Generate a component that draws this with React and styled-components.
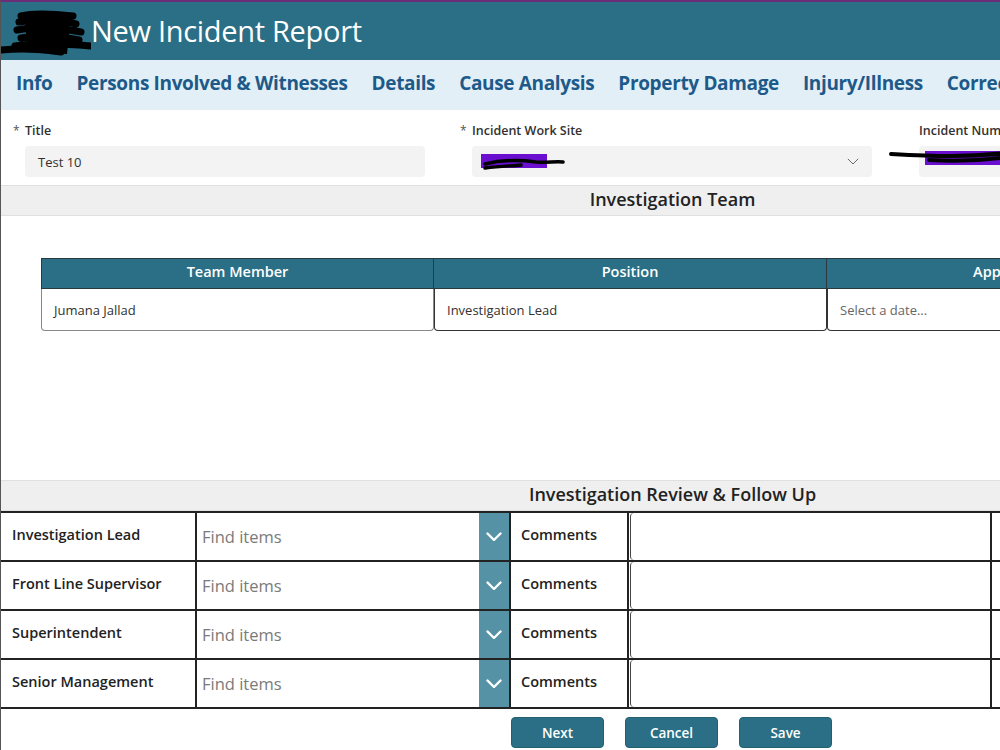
import React from 'react';
import styled, { createGlobalStyle } from 'styled-components';

const Global = createGlobalStyle`
  html, body {
    margin: 0;
    padding: 0;
    background: #ffffff;
    overflow: hidden;
  }
  body {
    font-family: "Open Sans", "Noto Sans", "Liberation Sans", sans-serif;
  }
`;

const TEAL = '#2a6f85';

const Page = styled.div`
  width: 1344px;
  height: 750px;
  border-top: 2px solid #6b2c78;
  border-left: 1px solid #555;
  box-sizing: border-box;
  background: #fff;
`;

const Header = styled.header`
  height: 58px;
  background: ${TEAL};
  display: flex;
  align-items: center;
`;

const Logo = styled.svg`
  width: 90px;
  height: 50px;
  flex-shrink: 0;
`;

const Title = styled.h1`
  margin: 0 0 2px 0;
  color: #fff;
  font-size: 29px;
  font-weight: 500;
  letter-spacing: -0.3px;
`;

const Nav = styled.nav`
  height: 50px;
  background: #e2eff6;
  display: flex;
  align-items: center;
  gap: 24px;
  padding: 0 0 5px 15px;
  box-sizing: border-box;
`;

const NavItem = styled.span`
  color: #1d5a8a;
  font-size: 19px;
  font-weight: 700;
  white-space: nowrap;
  letter-spacing: -0.35px;
`;

const Fields = styled.div`
  height: 75px;
  display: grid;
  grid-template-columns: repeat(3, 447px);
  padding-left: 12px;
  padding-top: 10px;
  box-sizing: border-box;
`;

const Field = styled.div`
  display: flex;
  flex-direction: column;
`;

const Label = styled.label`
  font-size: 12.5px;
  font-weight: 600;
  color: #323130;
  height: 20px;
  display: flex;
  align-items: center;
  padding-left: ${p => (p.$req ? 0 : 12)}px;
  margin-bottom: 6px;
`;

const Star = styled.span`
  color: #555;
  font-weight: 400;
  width: 12px;
  font-size: 12px;
`;

const Input = styled.div`
  margin-left: 12px;
  width: 400px;
  height: 31px;
  background: #f3f3f3;
  border-radius: 4px;
  display: flex;
  align-items: center;
  justify-content: space-between;
  padding: 0 13px;
  box-sizing: border-box;
  font-size: 13px;
  color: #323130;
  position: relative;
`;

const SectionBar = styled.div`
  height: 31px;
  background: #efefef;
  border-top: 1px solid #e0e0e0;
  border-bottom: 1px solid #e0e0e0;
  box-sizing: border-box;
  display: flex;
  align-items: center;
  justify-content: center;
  padding-bottom: 3px;
  font-size: 18px;
  font-weight: 600;
  color: #222;
`;

const TeamArea = styled.div`
  height: 264px;
  padding: 42px 0 0 40px;
  box-sizing: border-box;
`;

const TeamTable = styled.div`
  display: grid;
  grid-template-columns: repeat(3, 393px);
`;

const TeamHead = styled.div`
  height: 31px;
  background: ${TEAL};
  border: 1px solid #2b3a40;
  border-left-width: ${p => (p.$first ? 1 : 0)}px;
  box-sizing: border-box;
  color: #fff;
  font-size: 14.5px;
  font-weight: 600;
  display: flex;
  align-items: center;
  justify-content: center;
  padding-bottom: 4px;
`;

const TeamCell = styled.div`
  height: 42px;
  border: 1px solid ${p => (p.$dark ? '#333' : '#888')};
  border-top: none;
  border-radius: 0 0 4px 4px;
  box-sizing: border-box;
  display: flex;
  align-items: center;
  padding-left: 12px;
  font-size: 13px;
  color: ${p => (p.$muted ? '#666' : '#323130')};
`;

const Review = styled.div`
  display: grid;
  grid-template-columns: 196px 282px 32px 118px 363px 350px;
  border-bottom: 2px solid #222;
`;

const LabelCell = styled.div`
  height: 49px;
  border-top: 2px solid #222;
  border-right: 2px solid #222;
  box-sizing: border-box;
  display: flex;
  align-items: center;
  padding-left: ${p => p.$pad || 11}px;
  padding-bottom: 5px;
  font-size: 14.5px;
  font-weight: 600;
  color: #222;
`;

const FindCell = styled.div`
  height: 49px;
  border-top: 2px solid #222;
  box-sizing: border-box;
  display: flex;
  align-items: center;
  padding-left: 5px;
  padding-bottom: 1px;
  font-size: 16.5px;
  color: #7a7a7a;
`;

const ChevronBtn = styled.div`
  height: 49px;
  background: #5592a5;
  border-top: 2px solid #222;
  border-right: 2px solid #222;
  box-sizing: border-box;
  display: flex;
  align-items: center;
  justify-content: center;
`;

const CommentBox = styled.div`
  height: 49px;
  border-top: 2px solid #222;
  border-right: 2px solid #222;
  box-sizing: border-box;
  background: #fff;
  padding: 0 0 0 1px;
  & > div {
    height: 100%;
    border-left: 1px solid #444;
    border-radius: 4px;
  }
`;

const EmptyCell = styled.div`
  height: 49px;
  border-top: 2px solid #222;
  box-sizing: border-box;
`;

const Buttons = styled.div`
  display: flex;
  gap: 21px;
  padding: 8px 0 0 510px;
`;

const Button = styled.button`
  width: 93px;
  height: 31px;
  background: ${TEAL};
  border: 1px solid #24606f;
  border-radius: 4px;
  color: #fff;
  font-family: inherit;
  font-size: 13.5px;
  font-weight: 600;
`;

const Scribble = styled.svg`
  position: absolute;
  left: ${p => p.$x}px;
  top: ${p => p.$y}px;
  overflow: visible;
`;

const Chevron = ({ color = '#fff', w = 16, sw = 2.4 }) => (
  <svg width={w} height={w * 0.6} viewBox="0 0 16 9.6" fill="none">
    <path d="M1.5 1.5 L8 8 L14.5 1.5" stroke={color} strokeWidth={sw} strokeLinecap="round" strokeLinejoin="round" />
  </svg>
);

const navItems = [
  'Info',
  'Persons Involved & Witnesses',
  'Details',
  'Cause Analysis',
  'Property Damage',
  'Injury/Illness',
  'Corrective Actions',
];

const reviewRows = ['Investigation Lead', 'Front Line Supervisor', 'Superintendent', 'Senior Management'];

export default function App() {
  return (
    <Page>
      <Global />
      <Header>
        <Logo viewBox="0 0 90 50">
          <path d="M20 10 C35 6 55 8 72 10 M18 16 C40 12 60 14 75 18 M16 24 C35 20 60 22 80 26 M20 32 C40 28 58 30 78 34 M14 40 C40 36 65 38 90 40 M0 44 C20 42 40 43 60 46"
            stroke="#000" strokeWidth="7" fill="none" strokeLinecap="round" />
          <path d="M24 12 L70 8 L66 48 L26 46 Z" fill="#000" />
        </Logo>
        <Title>New Incident Report</Title>
      </Header>
      <Nav>
        {navItems.map(n => (
          <NavItem key={n}>{n}</NavItem>
        ))}
      </Nav>
      <Fields>
        <Field>
          <Label $req><Star>*</Star>Title</Label>
          <Input>Test 10</Input>
        </Field>
        <Field>
          <Label $req><Star>*</Star>Incident Work Site</Label>
          <Input>
            <Scribble $x={9} $y={8} width="85" height="18" viewBox="0 0 85 18">
              <rect x="0" y="0" width="66" height="14" fill="#6a0fd0" />
              <path d="M4 10 C20 6 40 6 55 8 C65 9 75 7 82 8 M4 14 C20 12 30 12 40 11" stroke="#000" strokeWidth="3.5" fill="none" strokeLinecap="round" />
            </Scribble>
            <span />
            <Chevron color="#666" w={12} sw={1.3} />
          </Input>
        </Field>
        <Field>
          <Label>Incident Number</Label>
          <Input>
            <Scribble $x={-30} $y={0} width="130" height="20" viewBox="0 0 130 20">
              <rect x="36" y="5" width="94" height="14" fill="#6a0fd0" />
              <path d="M2 8 C40 10 80 12 125 6 M40 14 C70 16 100 14 125 10" stroke="#000" strokeWidth="4" fill="none" strokeLinecap="round" />
            </Scribble>
          </Input>
        </Field>
      </Fields>

      <SectionBar>Investigation Team</SectionBar>
      <TeamArea>
        <TeamTable>
          <TeamHead $first>Team Member</TeamHead>
          <TeamHead>Position</TeamHead>
          <TeamHead>Approval Date</TeamHead>
          <TeamCell>Jumana Jallad</TeamCell>
          <TeamCell $dark>Investigation Lead</TeamCell>
          <TeamCell $dark $muted>Select a date...</TeamCell>
        </TeamTable>
      </TeamArea>

      <SectionBar>Investigation Review &amp; Follow Up</SectionBar>
      <Review>
        {reviewRows.map(r => (
          <React.Fragment key={r}>
            <LabelCell>{r}</LabelCell>
            <FindCell>Find items</FindCell>
            <ChevronBtn>
              <Chevron />
            </ChevronBtn>
            <LabelCell $pad={10}>Comments</LabelCell>
            <CommentBox><div /></CommentBox>
            <EmptyCell />
          </React.Fragment>
        ))}
      </Review>
      <Buttons>
        <Button>Next</Button>
        <Button>Cancel</Button>
        <Button>Save</Button>
      </Buttons>
    </Page>
  );
}
